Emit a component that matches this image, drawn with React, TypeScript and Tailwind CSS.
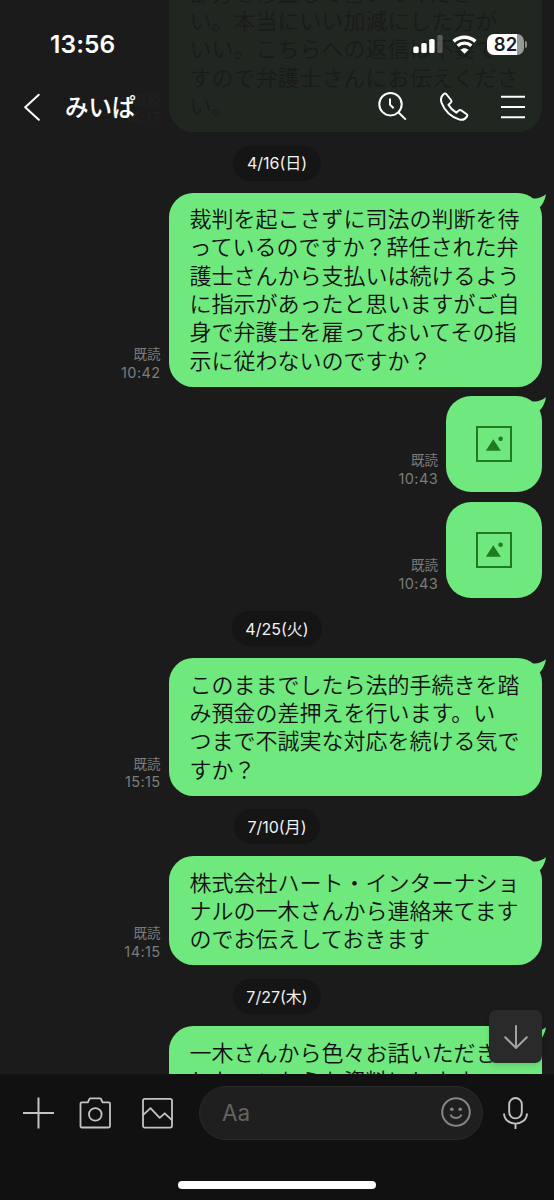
import type { ReactNode } from "react";

type Message = {
  time: string;
  lines?: string[]; // no lines means a photo placeholder
  tail?: boolean;
};

type Group = {
  date?: string;
  messages: Message[];
};

const GROUPS: Group[] = [
  {
    messages: [
      {
        time: "14:17",
        lines: [
          "部分を修正して書いてくださ",
          "い。本当にいい加減にした方が",
          "いい。こちらへの返信は不要で",
          "すので弁護士さんにお伝えくださ",
          "い。",
        ],
      },
    ],
  },
  {
    date: "4/16(日)",
    messages: [
      {
        time: "10:42",
        tail: true,
        lines: [
          "裁判を起こさずに司法の判断を待",
          "っているのですか？辞任された弁",
          "護士さんから支払いは続けるよう",
          "に指示があったと思いますがご自",
          "身で弁護士を雇っておいてその指",
          "示に従わないのですか？",
        ],
      },
      { time: "10:43", tail: true },
      { time: "10:43" },
    ],
  },
  {
    date: "4/25(火)",
    messages: [
      {
        time: "15:15",
        tail: true,
        lines: [
          "このままでしたら法的手続きを踏",
          "み預金の差押えを行います。い",
          "つまで不誠実な対応を続ける気で",
          "すか？",
        ],
      },
    ],
  },
  {
    date: "7/10(月)",
    messages: [
      {
        time: "14:15",
        tail: true,
        lines: [
          "株式会社ハート・インターナショ",
          "ナルの一木さんから連絡来てます",
          "のでお伝えしておきます",
        ],
      },
    ],
  },
  {
    date: "7/27(木)",
    messages: [
      {
        time: "",
        tail: true,
        lines: ["一木さんから色々お話いただきま", "した。こちらも資料にします。"],
      },
    ],
  },
];

function Tail() {
  return (
    <svg
      className="absolute -right-1 top-0 h-4 w-5"
      viewBox="0 0 20 16"
      fill="#6fe97e"
    >
      <path d="M6.5 5.2 C11 6 16 4.4 20 1.2 C19.2 6.5 17 11 13.8 14.6 L7 14 Z" />
    </svg>
  );
}

function PhotoIcon() {
  return (
    <svg className="size-9" viewBox="0 0 36 36" fill="none">
      <rect x="1" y="1" width="34" height="34" stroke="#1f7a22" strokeWidth="2" />
      <path d="M17.3 13.3 L24.8 24.7 H9.8 Z" fill="#1f7a22" />
      <circle cx="24.6" cy="12.8" r="2.3" fill="#1f7a22" />
    </svg>
  );
}

function Bubble({ message }: { message: Message }) {
  return (
    <div className="flex items-end justify-end gap-2 pr-3">
      <div className="pb-[5px] text-right text-[14.5px] leading-[17.6px] text-[#7c7c7c]">
        {message.time && (
          <>
            <p className="text-[13.5px]">既読</p>
            <p className="tracking-[0.4px]">{message.time}</p>
          </>
        )}
      </div>
      {message.lines ? (
        <div className="relative w-[373.5px] shrink-0 rounded-[24.5px] bg-[#6fe97e] pb-[11.7px] pl-[21px] pt-[12.5px] font-[Inter,'Noto_Sans_CJK_JP_DemiLight','Noto_Sans_CJK_JP',sans-serif] text-[22px] leading-[28.3px] text-[#111]">
          {message.lines.map((line) => (
            <p key={line} className="whitespace-nowrap">
              {line}
            </p>
          ))}
          {message.tail && <Tail />}
        </div>
      ) : (
        <div className="relative flex size-24 shrink-0 items-center justify-center rounded-[25px] bg-[#6fe97e]">
          <PhotoIcon />
          {message.tail && <Tail />}
        </div>
      )}
    </div>
  );
}

function DatePill({ children }: { children: ReactNode }) {
  return (
    <div className="mb-3 mt-[13.7px] flex justify-center">
      <span className="flex h-[35px] items-center rounded-full bg-[#151515] px-[13.5px] text-[16px] text-[#f2f2f2]">
        {children}
      </span>
    </div>
  );
}

function StatusBar() {
  return (
    <div className="flex items-center justify-between pl-[50px] pr-[27px] pt-[29px]">
      <span className="text-[24.5px] font-semibold leading-[30px] tracking-[0.1px]">
        13:56
      </span>
      <div className="flex items-center">
        <svg className="mr-[9px] h-[18px] w-[30px]" viewBox="0 0 30 18" fill="#fff">
          <rect x="0.3" y="11.5" width="5.4" height="6.5" rx="1.6" />
          <rect x="8.3" y="8" width="5.4" height="10" rx="1.6" />
          <rect x="16.2" y="4" width="5.4" height="14" rx="1.6" />
          <rect x="24.3" y="0" width="5.4" height="18" rx="1.6" opacity="0.25" />
        </svg>
        <svg className="mr-2.5 h-[19px] w-[25px]" viewBox="0 0 25 19" fill="none">
          <path d="M1.6 6.4 C7.8 0.8 17.2 0.8 23.4 6.4" stroke="#fff" strokeWidth="3.5" />
          <path d="M5.6 10.8 C9.6 7.3 15.4 7.3 19.4 10.8" stroke="#fff" strokeWidth="3.3" />
          <path d="M12.5 18.8 L8.4 14.7 C10.8 12.6 14.2 12.6 16.6 14.7 Z" fill="#fff" />
        </svg>
        <div className="relative flex h-[21px] w-[37px] items-center justify-center overflow-hidden rounded-[7px] bg-[linear-gradient(to_right,#fff_82%,#989a98_82%)] text-[18.5px] font-semibold leading-none text-[#1d201e]">
          82
        </div>
        <span className="ml-[1px] h-[7px] w-[2px] rounded-r-full bg-[#8b8d8b]" />
      </div>
    </div>
  );
}

function Header() {
  return (
    <header className="absolute inset-x-0 top-0 h-[140px] bg-[#1b1b1b]/95 text-white">
      <StatusBar />
      <div className="flex items-center pl-6 pr-[29px] pt-[33px]">
        <svg className="h-[30px] w-4" viewBox="0 0 16 30" fill="none" stroke="#fff" strokeWidth="2" strokeLinecap="round" strokeLinejoin="round">
          <path d="M14.8 2.8 L1.2 15.2 L14.8 27.8" />
        </svg>
        <h1 className="ml-[25px] grow pt-0.5 text-[23.5px] font-medium leading-[28px] [-webkit-text-stroke:0.1px_white]">
          みいぱ
        </h1>
        <svg className="mr-[31.5px] size-[30px]" viewBox="0 0 30 30" fill="none" stroke="#fff" strokeWidth="2">
          <circle cx="13.5" cy="12.2" r="11.2" />
          <path d="M21.3 20.3 L28.8 27.6" />
          <path d="M13 6.5 V12.7 L16.6 16.3" />
        </svg>
        <svg className="mr-[32.5px] size-[30px]" viewBox="0 0 30 30" fill="none" stroke="#fff" strokeWidth="2" strokeLinejoin="round">
          <path d="M7.2 2 L12 8 Q13 9.3 11.8 10.6 L9.5 12.8 Q12 17.5 17.3 20.7 L19.8 18.5 Q21 17.5 22.3 18.4 L27.7 22.3 Q28.7 23.3 28 24.4 Q25.2 28.8 20.6 27.6 Q7.5 23.5 2.5 10.6 Q0.8 5.2 4.8 1.9 Q6.2 0.9 7.2 2 Z" />
        </svg>
        <svg className="h-[30px] w-6" viewBox="0 0 24 30" stroke="#fff" strokeWidth="2">
          <path d="M0 4.8 H24 M0 15 H24 M0 25.2 H24" />
        </svg>
      </div>
    </header>
  );
}

function InputBar() {
  return (
    <footer className="flex h-[126px] flex-col bg-[#111]">
      <div className="flex items-center pl-[22px] pr-[26px] pt-3">
        <svg className="size-8" viewBox="0 0 32 32" stroke="#c4c4c4" strokeWidth="2">
          <path d="M1 16 H32 M16.5 0.5 V31.5" />
        </svg>
        <svg className="ml-[25px] size-8" viewBox="0 0 32 32" fill="none" stroke="#c4c4c4" strokeWidth="1.8" strokeLinejoin="round">
          <path d="M3 5.3 H8.8 L10.5 1.9 Q10.8 1.3 11.6 1.3 H20.8 Q21.6 1.3 22 2 L23.6 5.3 H29.5 Q31 5.3 31 6.8 V29 Q31 30.5 29.5 30.5 H3 Q1.5 30.5 1.5 29 V6.8 Q1.5 5.3 3 5.3 Z" />
          <circle cx="16.3" cy="17.4" r="6.3" />
        </svg>
        <svg className="ml-[30px] size-8" viewBox="0 0 32 32" fill="none" stroke="#c4c4c4" strokeWidth="1.8" strokeLinejoin="round">
          <rect x="2" y="1.8" width="29" height="28.8" rx="1.8" />
          <path d="M2 18.2 L9.5 11.2 L18.7 20.8 L23.7 16.3 L31 23.2" />
        </svg>
        <div className="ml-[26px] flex h-[54px] w-[284px] items-center justify-between rounded-full border border-[#292929] bg-[#1f1f1f] pl-[22px] pr-[11px]">
          <span className="text-[22.5px] text-[#636363]">Aa</span>
          <svg className="mb-0.5 size-[30px]" viewBox="0 0 30 30" fill="none" stroke="#858585" strokeWidth="2">
            <circle cx="15" cy="15" r="13.8" />
            <path d="M9.6 17.5 C11 22 19 22 20.4 17.5" />
            <circle cx="10.8" cy="12.2" r="1.8" fill="#858585" stroke="none" />
            <circle cx="19.2" cy="12.2" r="1.8" fill="#858585" stroke="none" />
          </svg>
        </div>
        <svg className="ml-5 h-8 w-[25px]" viewBox="0 0 25 32" fill="none" stroke="#c4c4c4" strokeWidth="1.9">
          <rect x="6.2" y="1" width="12.6" height="20.4" rx="6.3" />
          <path d="M1 16.5 C1.6 30 23.4 30 24 16.5 M12.5 26.5 V32" />
        </svg>
      </div>
      <div className="mx-auto mt-[41px] h-[7.5px] w-[198px] rounded-full bg-white" />
    </footer>
  );
}

export default function App() {
  return (
    <div className="relative flex h-[1200px] w-[554px] flex-col overflow-hidden bg-[#1b1b1b] font-[Inter,'Noto_Sans_CJK_JP',sans-serif]">
      <main className="relative h-[1074px] overflow-hidden">
        <div className="-mt-[33.7px]">
          {GROUPS.map((group, i) => (
            <section key={i}>
              {group.date && <DatePill>{group.date}</DatePill>}
              <div className="flex flex-col gap-[9.5px]">
                {group.messages.map((message, j) => (
                  <Bubble key={j} message={message} />
                ))}
              </div>
            </section>
          ))}
        </div>
        <button className="absolute bottom-[11px] right-3 flex size-[53px] items-center justify-center rounded-[7px] bg-[#2a2a2a] shadow-md">
          <svg className="size-6" viewBox="0 0 24 24" fill="none" stroke="#a3a3a3" strokeWidth="2" strokeLinecap="round">
            <path d="M12 1 V23 M1.2 12.2 L12 23 L22.8 12.2" />
          </svg>
        </button>
      </main>
      <InputBar />
      <Header />
    </div>
  );
}
